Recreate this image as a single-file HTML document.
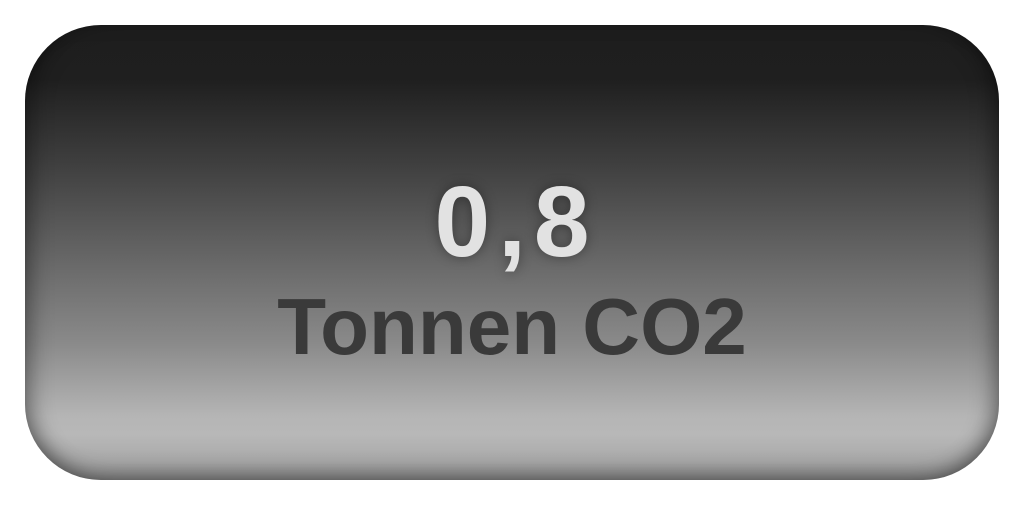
<!DOCTYPE html>
<html><head><style>
html,body{margin:0;padding:0;background:#fff;width:1024px;height:512px;overflow:hidden}
.card{position:absolute;left:25px;top:25px;width:974px;height:455px;border-radius:76px;
background:linear-gradient(180deg,#1e1e1e 0%,#1f1f1f 12%,#3e3e3e 30%,#646464 50%,#8a8a8a 70%,#b5b5b5 86%,#b8b8b8 90%,#9f9f9f 100%);
box-shadow:inset 14px 0 22px -8px rgba(0,0,0,.35),inset -14px 0 22px -8px rgba(0,0,0,.35),inset 0 -16px 20px -8px rgba(0,0,0,.3);
font-family:"Liberation Sans",sans-serif;font-weight:bold;text-align:center}
.a{position:absolute;left:0;right:0;top:142px;font-size:100px;line-height:110px;color:#e2e2e2;letter-spacing:8px;text-indent:8px;text-shadow:0 0 12px rgba(0,0,0,.35)}
.b{position:absolute;left:0;right:0;top:257px;font-size:80px;line-height:90px;color:#3a3a3a;letter-spacing:0px}
</style></head><body>
<div class="card"><div class="a">0,8</div><div class="b">Tonnen CO2</div></div>
</body></html>
